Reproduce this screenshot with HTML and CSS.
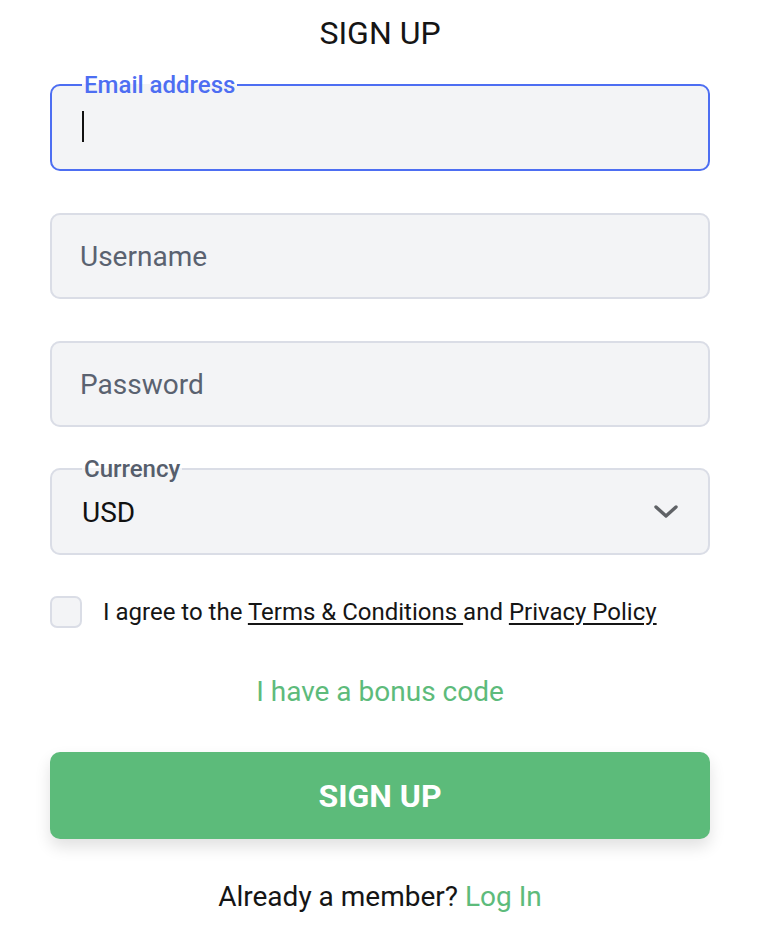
FILE: index.html
```html
<!DOCTYPE html>
<html lang="en">
<head>
<meta charset="utf-8">
<title>Sign up</title>
<link rel="stylesheet" href="styles.css">
</head>
<body>
<main class="signup">
  <h1 class="title">SIGN UP</h1>
  <form class="form">
    <div class="field">
      <fieldset class="box box--focus box--legend">
        <legend class="legend legend--focus">Email address</legend>
        <span class="caret"></span>
      </fieldset>
    </div>
    <div class="field">
      <fieldset class="box">
        <span class="placeholder">Username</span>
      </fieldset>
    </div>
    <div class="field">
      <fieldset class="box">
        <span class="placeholder">Password</span>
      </fieldset>
    </div>
    <div class="field">
      <fieldset class="box box--legend box--select">
        <legend class="legend">Currency</legend>
        <span class="value">USD</span>
        <svg class="chevron" width="26" height="16" viewBox="0 0 26 16"><path d="M3 3 L13 12 L23 3" fill="none" stroke="#5f6266" stroke-width="3.4" stroke-linecap="round" stroke-linejoin="round"/></svg>
      </fieldset>
    </div>
    <div class="agree">
      <span class="checkbox"></span>
      <span class="agree-text">I agree to the <a class="link" href="#">Terms &amp; Conditions </a>and <a class="link" href="#">Privacy Policy</a></span>
    </div>
    <div class="bonus">I have a bonus code</div>
    <button type="button" class="submit">SIGN UP</button>
    <div class="footer">Already a member? <a class="login" href="#">Log In</a></div>
  </form>
</main>
</body>
</html>
```
FILE: styles.css
```css
* { box-sizing: border-box; }
html, body { margin: 0; padding: 0; background: #fff; }
body {
  font-family: Roboto, "Noto Sans", "Liberation Sans", sans-serif;
  color: #111;
  width: 758px;
}
.signup {
  padding: 0 48px 0 50px;
}
.title {
  margin: 0;
  height: 66px;
  line-height: 66px;
  text-align: center;
  font-size: 32px;
  font-weight: 400;
  color: #151515;
}
.form { display: flex; flex-direction: column; }
.field {
  height: 86px;
  margin-top: 19px;
  margin-bottom: 23px;
  display: flex;
}
.field + .field { margin-top: 19px; }
.box {
  margin: 0;
  width: 100%;
  height: 86px;
  border: 2px solid #dadde6;
  border-radius: 10px;
  background: #f3f4f6;
  padding: 0 28px 0 28px;
  display: flex;
  align-items: center;
  min-width: 0;
}
.box--legend {
  margin-top: -13px;
  height: 99px;
  padding-bottom: 0;
}
.box--focus { border-color: #4d6ef2; }
.legend {
  padding: 0 2px;
  margin-left: 2px;
  font-size: 24px;
  line-height: 26px;
  font-weight: 500;
  color: #565e6c;
}
.legend--focus { color: #4d6ef2; }
.caret {
  display: block;
  width: 2px;
  height: 31px;
  background: #111;
  margin-left: 2px;
  margin-top: -14px;
}
.placeholder {
  font-size: 28px;
  color: #5a6270;
}
.value {
  font-size: 28px;
  color: #111;
  margin-left: 2px;
  margin-top: -10px;
  flex: 1;
}
.chevron { margin-top: -12px; margin-right: 1px; }
.agree {
  display: flex;
  align-items: center;
  margin-top: 18px;
  height: 32px;
  gap: 21px;
}
.checkbox {
  width: 32px;
  height: 32px;
  border: 2px solid #dadde6;
  border-radius: 7px;
  background: #f3f4f6;
  flex: none;
}
.agree-text { font-size: 24px; color: #151515; }
.link { color: #151515; text-decoration: underline; text-underline-offset: 3px; }
.bonus {
  margin-top: 48px;
  text-align: center;
  font-size: 28px;
  color: #5dbb7b;
  line-height: 32px;
}
.submit {
  margin-top: 44px;
  height: 87px;
  border: none;
  border-radius: 10px;
  background: #5cbb7a;
  color: #fff;
  font-family: inherit;
  font-size: 32px;
  font-weight: 700;
  box-shadow: 0 8px 16px rgba(0,0,0,0.12);
}
.footer {
  margin-top: 42px;
  text-align: center;
  font-size: 28px;
  line-height: 32px;
  color: #151515;
}
.login { color: #5dbb7b; text-decoration: none; }
```
